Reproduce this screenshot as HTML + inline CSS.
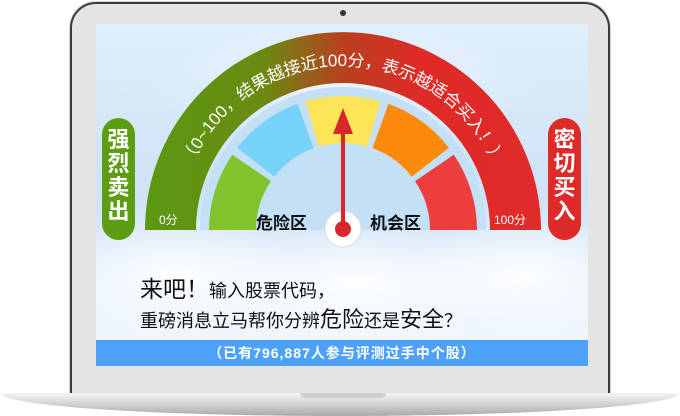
<!DOCTYPE html>
<html><head><meta charset="utf-8"><style>
html,body{margin:0;padding:0;background:#fff;width:680px;height:416px;overflow:hidden;position:relative;font-family:"Liberation Sans","Noto Sans CJK SC",sans-serif}
.lid{position:absolute;left:70px;top:2px;width:540px;height:396px;border-radius:26px 26px 4px 4px;background:#e4e4e4;border:2px solid #3a3a3a;box-sizing:border-box;box-shadow:0 0 0 1px #cfd6dc}
.screen{position:absolute;left:96px;top:24px;width:492px;height:342px;overflow:hidden;background:linear-gradient(#dfeefb,#cfe3f6 50%,#eaf3fc 80%,#f4f8fd)}
.cam{position:absolute;left:340px;top:10px;width:6px;height:6px;border-radius:50%;background:#333}
.base{position:absolute;left:0;top:393px;width:680px;height:23px;background:linear-gradient(#f4f4f4,#d9d9d9 40%,#a9a9a9);border-radius:0 0 50% 50%/0 0 100% 100%}
.notch{position:absolute;left:300px;top:393px;width:86px;height:5px;background:#cfcfcf;border-radius:0 0 6px 6px}
.t1{position:absolute;left:44px;top:246px;font-size:18px;color:#111;white-space:nowrap}
.t2{position:absolute;left:44px;top:278px;font-size:18px;color:#111;white-space:nowrap}
.bar{position:absolute;left:0;top:316px;width:492px;height:26px;background:#4da2f8;color:#fff;font-size:14px;font-weight:bold;text-align:center;line-height:26px;letter-spacing:1px}
.pill{position:absolute;top:94px;width:33px;height:122px;border-radius:17px;color:#fff;font-size:22px;font-weight:bold;text-align:center;line-height:24px;padding-top:10px;box-sizing:border-box}
</style></head><body>
<div class="lid"></div>
<div class="cam"></div>
<div class="screen">
<svg width="492" height="342" style="position:absolute;left:0;top:0">
<defs>
<linearGradient id="band" x1="0" x2="1" y1="0" y2="0"><stop offset="0" stop-color="#5a9912"/><stop offset="0.3" stop-color="#6a8a12"/><stop offset="0.5" stop-color="#b8401e"/><stop offset="0.7" stop-color="#e02a28"/><stop offset="1" stop-color="#e12a2a"/></linearGradient>
<radialGradient id="cl" cx="0.5" cy="0.5" r="0.5"><stop offset="0" stop-color="#fff" stop-opacity="0.9"/><stop offset="1" stop-color="#fff" stop-opacity="0"/></radialGradient>
<path id="tp" d="M 83 206 A 164 164 0 0 1 411 206"/>
</defs>
<ellipse cx="80" cy="250" rx="130" ry="60" fill="url(#cl)"/>
<ellipse cx="260" cy="260" rx="180" ry="60" fill="url(#cl)"/>
<ellipse cx="430" cy="250" rx="120" ry="60" fill="url(#cl)"/>
<ellipse cx="246" cy="60" rx="200" ry="60" fill="url(#cl)" opacity="0.5"/>
<path d="M 49 206 A 198 198 0 0 1 445 206 L 394 206 A 147 147 0 0 0 100 206 Z" fill="url(#band)"/>
<path d="M 104 206 A 143 143 0 0 1 390 206 Z" fill="#c4e0f7"/>
<g id="segs"></g>
<text font-size="17" fill="#fff" font-family="Liberation Sans,Noto Sans CJK SC,sans-serif"><textPath href="#tp" startOffset="50%" text-anchor="middle">（0~100，结果越接近100分，表示越适合买入！）</textPath></text>
<text x="63" y="200" font-size="12" fill="#fff">0分</text>
<text x="398" y="200" font-size="12" fill="#fff">100分</text>
<text x="160" y="205" font-size="17" font-weight="bold" fill="#111">危险区</text>
<text x="274" y="205" font-size="17" font-weight="bold" fill="#111">机会区</text>
<circle cx="247" cy="205" r="18" fill="#fff" stroke="#ddd"/>
<rect x="245" y="104" width="4" height="101" fill="#d8262c"/>
<path d="M 237 110 L 247 84 L 257 110 Z" fill="#d8262c"/>
<circle cx="247" cy="205" r="8" fill="#d8262c"/>
</svg>
<div class="pill" style="left:6px;background:#5d9d14">强<br>烈<br>卖<br>出</div>
<div class="pill" style="left:452px;background:#df2a2a">密<br>切<br>买<br>入</div>
<div class="t1"><span style="font-size:23px">来吧！</span>输入股票代码，</div>
<div class="t2">重磅消息立马帮你分辨<span style="font-size:22px">危险</span>还是<span style="font-size:22px">安全</span>？</div>
<div class="bar">（已有796,887人参与评测过手中个股）</div>
</div>
<div class="base"></div>
<div class="notch"></div>
<script>
var cx=247,cy=206,R=134,r=87,cols=["#82c22c","#78d3fb","#fde55a","#fb8a0a","#ee3d3d"],g=document.getElementById("segs"),h="";
function p(a,rr){a=a*Math.PI/180;return (cx+rr*Math.cos(a)).toFixed(1)+" "+(cy-rr*Math.sin(a)).toFixed(1);}
for(var i=0;i<5;i++){var a1=180-36*i-(i?1.8:0),a2=180-36*(i+1)+(i<4?1.8:0);
h+='<path d="M '+p(a1,r)+' L '+p(a1,R)+' A '+R+' '+R+' 0 0 1 '+p(a2,R)+' L '+p(a2,r)+' A '+r+' '+r+' 0 0 0 '+p(a1,r)+' Z" fill="'+cols[i]+'"/>';}
g.innerHTML=h;
</script>
</body></html>
